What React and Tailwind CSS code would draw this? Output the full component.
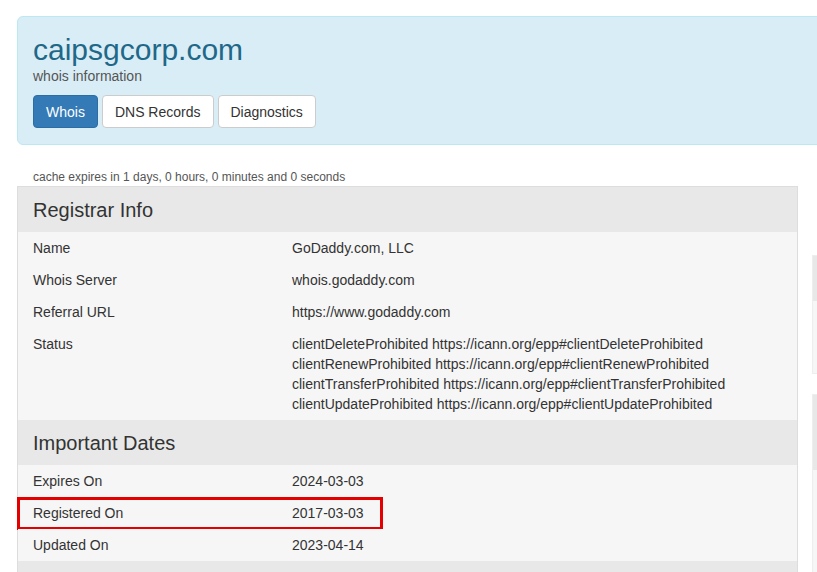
import React from "react";

const registrar = [
  { label: "Name", value: ["GoDaddy.com, LLC"] },
  { label: "Whois Server", value: ["whois.godaddy.com"] },
  { label: "Referral URL", value: ["https://www.godaddy.com"] },
  {
    label: "Status",
    value: [
      "clientDeleteProhibited https://icann.org/epp#clientDeleteProhibited",
      "clientRenewProhibited https://icann.org/epp#clientRenewProhibited",
      "clientTransferProhibited https://icann.org/epp#clientTransferProhibited",
      "clientUpdateProhibited https://icann.org/epp#clientUpdateProhibited",
    ],
  },
];

const dates = [
  { label: "Expires On", value: ["2024-03-03"] },
  { label: "Registered On", value: ["2017-03-03"], marked: true },
  { label: "Updated On", value: ["2023-04-14"] },
];

const SectionHead = ({ title }) => (
  <div className="bg-[#e7e8e7] h-[45px] flex items-center px-[15px] text-[20px] leading-[26px]">
    {title}
  </div>
);

const Row = ({ label, value, marked }) => (
  <div className="relative flex bg-[#f6f6f6] py-[6px] leading-5">
    <div className="w-[274px] shrink-0 pl-[15px]">{label}</div>
    <div className="flex flex-col">
      {value.map((v, i) => (
        <span key={i}>{v}</span>
      ))}
    </div>
    {marked && (
      <div className="absolute left-[-1px] top-0 w-[366px] h-[33px] border-[3px] border-[#e50000]" />
    )}
  </div>
);

const App = () => {
  return (
    <div className="w-[817px] h-[572px] overflow-hidden bg-white text-[#333] text-sm font-['Liberation_Sans',Arial,sans-serif]">
      <div className="w-[1100px] pl-[17px] pt-4">

        <div className="border border-[#bce8f1] bg-[#d9edf7] rounded-md px-[15px] pt-4 pb-4">
          <h1 className="text-[30px] leading-[33px] text-[#1f6888]">caipsgcorp.com</h1>
          <p className="leading-5 text-[#555]">whois information</p>
          <div className="flex gap-1 mt-[9px]">
            <div className="h-[33px] px-3 flex items-center rounded-[4px] border border-[#2e6da4] bg-[#337ab7] text-white">
              Whois
            </div>
            <div className="h-[33px] px-3 flex items-center rounded-[4px] border border-[#ccc] bg-white">
              DNS Records
            </div>
            <div className="h-[33px] px-3 flex items-center rounded-[4px] border border-[#ccc] bg-white">
              Diagnostics
            </div>
          </div>
        </div>

        <div className="flex gap-[14px] mt-[24px]">
          <div className="w-[781px] shrink-0">
            <p className="text-xs leading-[17px] text-[#555] pl-4">
              cache expires in 1 days, 0 hours, 0 minutes and 0 seconds
            </p>
            <div className="border border-[#ddd]">
              <SectionHead title="Registrar Info" />
              {registrar.map((r) => (
                <Row key={r.label} {...r} />
              ))}
              <SectionHead title="Important Dates" />
              {dates.map((r) => (
                <Row key={r.label} {...r} />
              ))}
              <SectionHead title="" />
            </div>
          </div>

          <div className="w-[260px] shrink-0 mt-[86px] flex flex-col gap-5">
            <div className="border border-[#eee]">
              <div className="h-[45px] bg-[#e7e8e7]" />
              <div className="h-[72px] bg-[#f6f6f6]" />
            </div>
            <div className="border border-[#eee]">
              <div className="h-[75px] bg-[#e7e8e7]" />
              <div className="h-[200px] bg-[#f6f6f6]" />
            </div>
          </div>
        </div>

      </div>
    </div>
  );
};

export default App;
